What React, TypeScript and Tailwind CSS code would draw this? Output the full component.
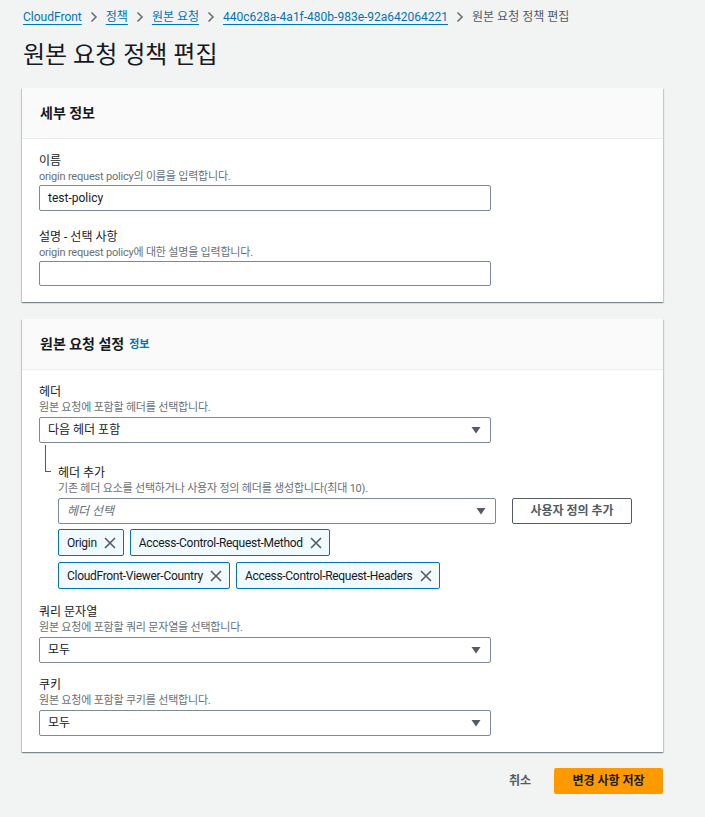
import { ReactNode } from 'react';

const Chevron = () => (
  <svg width="8" height="12" viewBox="0 0 8 12" className="mx-[8px] shrink-0">
    <path d="M1.5 1.5 L6 6 L1.5 10.5" fill="none" stroke="#687078" strokeWidth="1.6" />
  </svg>
);

const Caret = () => (
  <svg width="10" height="8" viewBox="0 0 10 8" className="shrink-0">
    <path d="M0.5 1 L9.5 1 L5 7.5 Z" fill="#545b64" />
  </svg>
);

const XIcon = () => (
  <svg width="14" height="14" viewBox="0 0 14 14" className="shrink-0">
    <path d="M2 2 L12 12 M12 2 L2 12" fill="none" stroke="#545b64" strokeWidth="1.6" />
  </svg>
);

function Card({ title, info, children }: { title: string; info?: boolean; children: ReactNode }) {
  return (
    <div className="bg-white shadow-[0_1px_1px_0_rgba(0,28,36,0.3),1px_1px_1px_0_rgba(0,28,36,0.15),-1px_1px_1px_0_rgba(0,28,36,0.15)]">
      <div className="h-[51px] flex items-center px-[18px] bg-[#fafafa] border-b border-[#eaeded]">
        <h2 className="text-[14px] font-bold text-[#16191f]">{title}</h2>
        {info && <a className="ml-[5px] text-[11px] text-[#0073bb] font-bold mt-[2px]">정보</a>}
      </div>
      <div className="px-[17px] pt-[14px] pb-[16px]">{children}</div>
    </div>
  );
}

function Field({ label, desc, children, className = '' }: { label: string; desc: string; children: ReactNode; className?: string }) {
  return (
    <div className={className}>
      <div className="text-[12px] leading-[16px] text-[#16191f]">{label}</div>
      <div className="text-[11px] leading-[16px] text-[#687078] tracking-[-0.2px]">{desc}</div>
      {children}
    </div>
  );
}

function Select({ value, placeholder, width = 'w-[452px]' }: { value?: string; placeholder?: string; width?: string }) {
  return (
    <div className={`${width} h-[26px] mt-[1px] border border-[#7d8998] rounded-[2px] bg-white flex items-center justify-between pl-[8px] pr-[9px]`}>
      {value ? (
        <span className="text-[12px] text-[#16191f]">{value}</span>
      ) : (
        <span className="text-[12px] italic text-[#687078]">{placeholder}</span>
      )}
      <Caret />
    </div>
  );
}

function Token({ text }: { text: string }) {
  return (
    <div className="h-[27px] flex items-center gap-[6px] pl-[8px] pr-[6px] border border-[#0073bb] rounded-[2px] bg-[#f1faff]">
      <span className="text-[12px] text-[#16191f] tracking-[-0.3px]">{text}</span>
      <XIcon />
    </div>
  );
}

export default function App() {
  return (
    <div className="min-h-screen bg-[#f2f3f3] pl-[22px] pr-[42px] pt-[9px] pb-[20px] font-[Roboto,'Noto_Sans_CJK_KR',sans-serif]">
      <nav className="flex items-center h-[16px] text-[12px] pl-[1px]">
        <a className="text-[#0073bb] underline underline-offset-[3px]">CloudFront</a>
        <Chevron />
        <a className="text-[#0073bb] underline underline-offset-[3px]">정책</a>
        <Chevron />
        <a className="text-[#0073bb] underline underline-offset-[3px]">원본 요청</a>
        <Chevron />
        <a className="text-[#0073bb] underline underline-offset-[3px]">440c628a-4a1f-480b-983e-92a642064221</a>
        <Chevron />
        <span className="text-[#545b64]">원본 요청 정책 편집</span>
      </nav>

      <h1 className="mt-[15px] h-[30px] leading-[30px] text-[24px] text-[#16191f] pl-[1px]">원본 요청 정책 편집</h1>

      <div className="mt-[18px] flex flex-col gap-[17px]">
        <Card title="세부 정보">
          <Field label="이름" desc="origin request policy의 이름을 입력합니다.">
            <div className="w-[452px] h-[26px] border border-[#7d8998] rounded-[2px] bg-white flex items-center px-[8px] text-[12px] text-[#16191f]">
              test-policy
            </div>
          </Field>
          <Field className="mt-[18px]" label="설명 - 선택 사항" desc="origin request policy에 대한 설명을 입력합니다.">
            <div className="w-[452px] h-[25px] border border-[#7d8998] rounded-[2px] bg-white" />
          </Field>
        </Card>

        <Card title="원본 요청 설정" info>
          <Field label="헤더" desc="원본 요청에 포함할 헤더를 선택합니다.">
            <Select value="다음 헤더 포함" />
          </Field>

          <div className="flex">
            <div className="w-[19px] shrink-0">
              <div className="mt-[2px] ml-[6px] w-[6px] h-[27px] border-l border-b border-[#545b64]" />
            </div>
            <div className="pt-[22px]">
              <Field label="헤더 추가" desc="기존 헤더 요소를 선택하거나 사용자 정의 헤더를 생성합니다(최대 10).">
                <div className="flex items-start">
                  <Select placeholder="헤더 선택" width="w-[438px]" />
                  <button className="ml-[16px] mt-[1px] w-[120px] h-[26px] border border-[#545b64] rounded-[2px] bg-white text-[12px] font-bold text-[#545b64]">
                    사용자 정의 추가
                  </button>
                </div>
              </Field>
              <div className="w-[438px] mt-[5px] flex flex-wrap gap-[6px]">
                <Token text="Origin" />
                <Token text="Access-Control-Request-Method" />
                <Token text="CloudFront-Viewer-Country" />
                <Token text="Access-Control-Request-Headers" />
              </div>
            </div>
          </div>

          <Field className="mt-[15px]" label="쿼리 문자열" desc="원본 요청에 포함할 쿼리 문자열을 선택합니다.">
            <Select value="모두" />
          </Field>
          <Field className="mt-[14px]" label="쿠키" desc="원본 요청에 포함할 쿠키를 선택합니다.">
            <Select value="모두" />
          </Field>
        </Card>
      </div>

      <div className="mt-[16px] flex justify-end items-center">
        <button className="text-[12px] font-bold text-[#545b64] px-[4px] mr-[19px]">취소</button>
        <button className="w-[109px] h-[26px] bg-[#ff9900] rounded-[2px] text-[12px] font-bold text-[#16191f]">
          변경 사항 저장
        </button>
      </div>
    </div>
  );
}
